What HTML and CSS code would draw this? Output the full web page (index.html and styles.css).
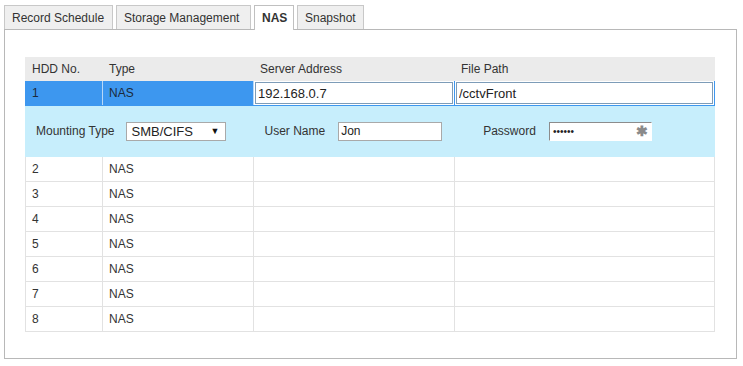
FILE: index.html
```html
<!DOCTYPE html>
<html>
<head>
<meta charset="utf-8">
<link rel="stylesheet" href="styles.css">
</head>
<body>
<div class="page">
  <div class="tabs">
    <div class="tab">Record Schedule</div>
    <div class="tab">Storage Management</div>
    <div class="tab active">NAS</div>
    <div class="tab">Snapshot</div>
  </div>
  <div class="panel">
    <table class="grid">
      <colgroup>
        <col class="c1"><col class="c2"><col class="c3"><col class="c4">
      </colgroup>
      <thead>
        <tr class="head"><th>HDD No.</th><th>Type</th><th>Server Address</th><th>File Path</th></tr>
      </thead>
      <tbody>
        <tr class="sel">
          <td>1</td><td>NAS</td>
          <td class="incell"><input class="cellinput" type="text" value="192.168.0.7"></td>
          <td class="incell"><input class="cellinput" type="text" value="/cctvFront"></td>
        </tr>
        <tr class="detail">
          <td colspan="4">
            <div class="detail-row">
              <label class="lbl l1">Mounting Type</label>
              <div class="select"><span>SMB/CIFS</span><span class="arrow">&#9660;</span></div>
              <label class="lbl l2">User Name</label>
              <input class="field user" type="text" value="Jon">
              <label class="lbl l3">Password</label>
              <div class="field pwd"><span class="dots">&bull;&bull;&bull;&bull;&bull;&bull;</span><span class="star">&#10033;</span></div>
            </div>
          </td>
        </tr>
        <tr><td>2</td><td>NAS</td><td></td><td></td></tr>
        <tr><td>3</td><td>NAS</td><td></td><td></td></tr>
        <tr><td>4</td><td>NAS</td><td></td><td></td></tr>
        <tr><td>5</td><td>NAS</td><td></td><td></td></tr>
        <tr><td>6</td><td>NAS</td><td></td><td></td></tr>
        <tr><td>7</td><td>NAS</td><td></td><td></td></tr>
        <tr><td>8</td><td>NAS</td><td></td><td></td></tr>
      </tbody>
    </table>
  </div>
</div>
</body>
</html>
```

FILE: styles.css
```css
html, body {
  margin: 0;
  padding: 0;
  background: #ffffff;
}
body {
  font-family: "Liberation Sans", Arial, sans-serif;
  font-size: 12px;
  color: #333333;
}
.page {
  padding: 5px 0 0 4px;
  width: 733px;
}
.tabs {
  display: flex;
  gap: 3px;
  height: 24px;
  position: relative;
  z-index: 1;
}
.tab {
  box-sizing: border-box;
  height: 24px;
  padding: 0 7px;
  line-height: 24px;
  font-size: 12px;
  color: #333;
  background: #efefef;
  border: 1px solid #c8c8c8;
  border-bottom: none;
}
.tab:nth-child(1) { width: 109px; }
.tab:nth-child(2) { width: 135px; }
.tab:nth-child(3) { width: 40px; }
.tab:nth-child(4) { width: 67px; }
.tab.active {
  background: #ffffff;
  font-weight: bold;
  height: 25px;
  border-color: #c0c0c0;
}
.panel {
  box-sizing: border-box;
  width: 733px;
  height: 330px;
  border: 1px solid #b8b8b8;
  padding: 27px 0 0 20px;
}
.grid {
  border-collapse: collapse;
  table-layout: fixed;
  width: 689px;
}
.c1 { width: 77px; }
.c2 { width: 151px; }
.c3 { width: 201px; }
.c4 { width: 260px; }
.grid th, .grid td {
  box-sizing: border-box;
  height: 25px;
  padding: 0 0 0 6px;
  text-align: left;
  font-weight: normal;
  border: 1px solid #e2e2e2;
  white-space: nowrap;
}
.grid tr.head th {
  background: #ebebeb;
  border-color: #ebebeb;
  height: 23px;
}
.grid tr.sel td {
  background: #3d97ef;
  border-color: #3d97ef;
  border-right-color: #b8d8f8;
  color: #1c2a3a;
  height: 24px;
}
.grid tr.sel td.incell {
  padding: 1px 1px 1px 1px;
  background: #ffffff;
  border-color: #3d97ef;
}
.cellinput {
  box-sizing: border-box;
  width: 100%;
  height: 22px;
  margin: 0;
  padding: 0 2px;
  border: 1px solid #7d9cb8;
  font-family: "Liberation Sans", Arial, sans-serif;
  font-size: 13px;
  color: #222;
  outline: none;
}
.grid tr.detail td {
  background: #c7eefc;
  border-color: #c7eefc;
  height: 51px;
  padding: 0;
}
.detail-row {
  display: flex;
  align-items: center;
  height: 50px;
}
.lbl {
  font-size: 12px;
  color: #333;
}
.l1 { margin-left: 10px; }
.select {
  box-sizing: border-box;
  display: flex;
  justify-content: space-between;
  align-items: center;
  width: 100px;
  height: 19px;
  margin-left: 11px;
  padding: 0 5px 0 5px;
  background: #ffffff;
  border: 1px solid #a9a9a9;
  font-size: 13px;
  color: #222;
}
.arrow {
  font-size: 9px;
  color: #111;
}
.l2 { margin-left: 39px; }
.field {
  box-sizing: border-box;
  height: 19px;
  margin: 0 0 0 13px;
  background: #ffffff;
  border: 1px solid #a9a9a9;
  font-family: "Liberation Sans", Arial, sans-serif;
  font-size: 12px;
  color: #222;
  outline: none;
}
.user {
  width: 104px;
  padding: 0 2px;
}
.l3 { margin-left: 41px; }
.pwd {
  display: flex;
  align-items: center;
  justify-content: space-between;
  width: 103px;
  margin-left: 13px;
  padding: 0 3px 0 3px;
  border-color: #8c8c8c #ffffff #ffffff #8c8c8c;
}
.dots {
  font-size: 10px;
  letter-spacing: 0;
  color: #222;
}
.star {
  font-size: 14px;
  color: #8a8a8a;
  font-weight: bold;
}
```
